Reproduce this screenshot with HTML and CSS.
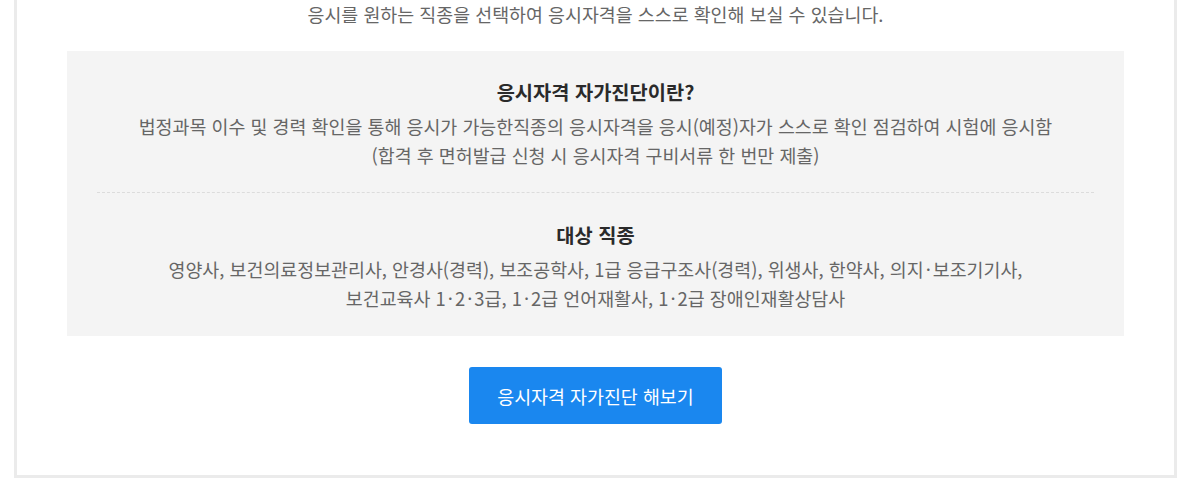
FILE: index.html
```html
<!DOCTYPE html>
<html lang="ko">
<head>
    <meta charset="utf-8">
    <meta name="viewport" content="width=device-width, initial-scale=1.0">
    <title>응시자격 자가진단</title>
    <link rel="stylesheet" href="styles.css">
</head>
<body>
    <div class="page-frame">
        <p class="intro">응시를 원하는 직종을 선택하여 응시자격을 스스로 확인해 보실 수 있습니다.</p>

        <div class="info-box">
            <div class="info-section">
                <h2>응시자격 자가진단이란?</h2>
                <p>
                    법정과목 이수 및 경력 확인을 통해 응시가 가능한직종의 응시자격을 응시(예정)자가 스스로 확인 점검하여 시험에 응시함<br>
                    (합격 후 면허발급 신청 시 응시자격 구비서류 한 번만 제출)
                </p>
            </div>
            <div class="info-section">
                <h2>대상 직종</h2>
                <p>
                    영양사, 보건의료정보관리사, 안경사(경력), 보조공학사, 1급 응급구조사(경력), 위생사, 한약사, 의지<span class="dot">·</span>보조기기사,<br>
                    보건교육사 1<span class="dot">·</span>2<span class="dot">·</span>3급, 1<span class="dot">·</span>2급 언어재활사, 1<span class="dot">·</span>2급 장애인재활상담사
                </p>
            </div>
        </div>

        <div class="action-row">
            <a class="btn-primary" href="#">응시자격 자가진단 해보기</a>
        </div>
    </div>
</body>
</html>
```

FILE: styles.css
```css
:root {
    --frame-border: #ebebeb;
    --box-bg: #f4f4f4;
    --text-color: #666;
    --heading-color: #2a2a2a;
    --accent-color: #1a87ef;
}

* {
    box-sizing: border-box;
}

body {
    margin: 0;
    background: #fff;
    font-family: 'Noto Sans CJK KR', 'Noto Sans', sans-serif;
    color: var(--text-color);
}

.page-frame {
    margin: 0 12px 10px 14px;
    border: 3px solid var(--frame-border);
    border-top: none;
    padding: 0 50px 51px;
}

.intro {
    margin: 0;
    font-size: 18.4px;
    line-height: 28px;
    text-align: center;
}

.info-box {
    margin-top: 23px;
    background-color: var(--box-bg);
    padding: 0 30px;
}

.info-section {
    text-align: center;
    padding: 28px 0 23px;
}

.info-section + .info-section {
    border-top: 1px dashed #dcdcdc;
    padding: 29px 0 24px;
}

.info-section h2 {
    margin: 0 0 7px;
    font-size: 19.8px;
    line-height: 26px;
    font-weight: 700;
    color: var(--heading-color);
}

.info-section p {
    margin: 0;
    font-size: 18.4px;
    line-height: 28.5px;
}

/* wider middle dot, like the original page font */
.info-section .dot {
    margin: 0 2px;
}

.action-row {
    display: flex;
    justify-content: center;
    margin-top: 31px;
}

.btn-primary {
    display: inline-flex;
    align-items: center;
    justify-content: center;
    width: 253px;
    height: 57px;
    background-color: var(--accent-color);
    color: #fff;
    border-radius: 3px;
    font-size: 18.4px;
    text-decoration: none;
}
```
